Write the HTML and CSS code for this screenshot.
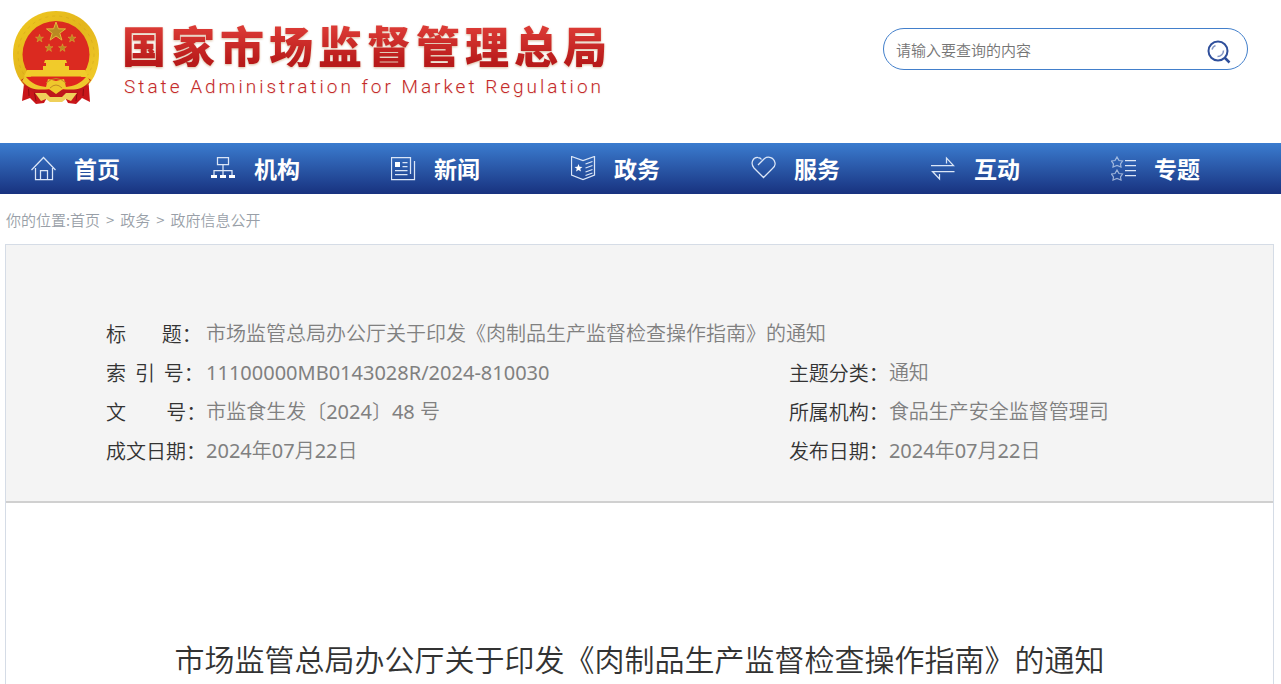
FILE: index.html
```html
<!DOCTYPE html>
<html lang="zh-CN">
<head>
<meta charset="utf-8">
<title>市场监管总局办公厅关于印发《肉制品生产监督检查操作指南》的通知</title>
<link rel="stylesheet" href="styles.css">
</head>
<body>
<header class="header">
  <a class="brand" href="#">
    <svg class="emblem" viewBox="0 0 88 94" aria-hidden="true">
      <defs>
        <linearGradient id="gold" x1="0" y1="0" x2="1" y2="1">
          <stop offset="0" stop-color="#f0ca1f"/><stop offset=".5" stop-color="#e3b51c"/><stop offset="1" stop-color="#f3cf2b"/>
        </linearGradient>
        <path id="star" d="M0-10 2.4-3.2 9.5-3.1 3.8 1.2 5.9 8.1 0 4-5.9 8.1-3.8 1.2-9.5-3.1-2.4-3.2Z"/>
      </defs>
      <path d="M13 64 10 90 18 87 24 93 32 92 37 83H51L56 92 64 93 70 87 78 91 76 64Z" fill="#c9161a"/>
      <path d="M16 68 17 85M21 74 24 90M72 68 71 85M66 74 64 90" stroke="#8d0c10" fill="none"/>
      <path d="M44 0C68 0 87 18 87 43 87 57 82 68 76 74L63 79H25L12 74C6 68 1 57 1 43 1 18 20 0 44 0Z" fill="url(#gold)"/>
      <circle cx="44" cy="43" r="38" fill="none" stroke="#c99b1c" stroke-width="1" stroke-dasharray="3 4" opacity=".4"/>
      <circle cx="44" cy="43.500" r="33.500" fill="#db2a20"/>
      <g fill="#b98a22" stroke="#e2bb3a" stroke-width="1">
        <use href="#star" transform="translate(44 21)"/>
        <use href="#star" transform="translate(27.500 27.500) scale(.42)"/>
        <use href="#star" transform="translate(60 27.500) scale(.42)"/>
        <use href="#star" transform="translate(37 37) scale(.42)"/>
        <use href="#star" transform="translate(50.500 37) scale(.42)"/>
      </g>
      <path d="M33 49H54L55 52H53V55H57V59H73L76 65.500H12L15 59H31V55H34V52H32Z" fill="#f1cb2a"/>
      <path d="M14 66H74L66 76 52 79H36L22 76Z" fill="#df251e"/>
      <path d="M14 66C20 77 28 76 36 79H52C60 76 68 77 74 66L79 69C72 81 62 84 51 86H37C26 84 16 81 9 69Z" fill="#bf171b"/>
      <path d="M13 65C20 73 26 75 34 76L36 68 44 70 52 68 54 76C62 75 68 73 75 65L78 70C70 80 60 79 51 78L44 83 37 78C28 79 18 80 10 70Z" fill="#efc82c"/>
      <path d="M23 82 34 82 38 86H50L54 82 65 82 59 90 54 88 50 91H38L34 88 29 90Z" fill="#efd05a"/>
      <path d="M34 72Q44 63 54 72M38 77Q44 71 50 77" fill="none" stroke="#c48b22" stroke-width="1"/>
    </svg>
    <span class="brand-text">
      <span class="brand-name">国家市场监督管理总局</span>
      <span class="brand-en">State Administration for Market Regulation</span>
    </span>
  </a>
  <form class="search" role="search">
    <input class="search-input" type="text" placeholder="请输入要查询的内容" aria-label="请输入要查询的内容">
    <button class="search-button" type="button" aria-label="搜索">
      <svg viewBox="0 0 24 24" width="24" height="24" fill="none" stroke="#2f4f9b" aria-hidden="true">
        <circle cx="11" cy="11" r="9.500" stroke-width="2"/>
        <path d="M17.500 17.500 22.500 22.500" stroke-width="2.500"/>
        <path d="M5 9.500A6 6 0 0 1 8.500 5.500M10.500 16.500A6 6 0 0 0 16.500 10.500" stroke-width="1.500" opacity=".6"/>
      </svg>
    </button>
  </form>
</header>

<nav class="nav" aria-label="主导航">
  <a class="nav-item" href="#">
    <svg class="nav-icon" viewBox="0 0 26 26"><path d="M.5 14 12.500 1.500 24.500 14M4.500 12V23.500H9.500V14.500H16.500V23.500H21.500V12M9.500 23.500H16.500"/></svg>首页</a>
  <a class="nav-item" href="#">
    <svg class="nav-icon" viewBox="0 0 26 26"><path d="M6.500 1.500H17.500V8.500H6.500ZM12 8.500V19M3 19V14.500H21V19"/><path class="solid" d="M0 19H6V22H0ZM9 19H15V22H9ZM18 19H24V22H18Z"/></svg>机构</a>
  <a class="nav-item" href="#">
    <svg class="nav-icon" viewBox="0 0 26 26"><path d="M19.500 18V1.500H.5V23.500H23.500V5M11.500 6.500H16.500M11.500 10.500H16.500M4 14.500H16.500M4 18.500H16.500"/><path class="solid" d="M4 6H9V11H4Z"/></svg>新闻</a>
  <a class="nav-item" href="#">
    <svg class="nav-icon" viewBox="0 0 26 26"><path d="M.5.500 12 4.500 23.500.500V19L12 23.500.500 19ZM14.500 8 21.500 5.500M14.500 12 21.500 9.500M14.500 16 21.500 13.500M14.500 19.500 21.500 17"/><path class="solid" d="M7.500 8 8.600 10.800 11.500 11 9.200 12.800 10 15.500 7.500 14 5 15.500 5.800 12.800 3.500 11 6.400 10.800Z"/></svg>政务</a>
  <a class="nav-item" href="#">
    <svg class="nav-icon" viewBox="0 0 26 26"><path d="M7 9 13.500 2.500C17 0 23 1 24 7 24.500 9 23 11.500 21 13L12.500 21.500 3 12C-1 7 2 1 7 1.500 8.500 1.500 10 2.500 10.500 3.500"/></svg>服务</a>
  <a class="nav-item" href="#">
    <svg class="nav-icon" viewBox="0 0 26 26"><path d="M0 9.500H22.500L15.500 2V7.500M23.500 15.500H1.500L8.500 23V18"/></svg>互动</a>
  <a class="nav-item" href="#">
    <svg class="nav-icon" viewBox="0 0 26 26"><path d="M14 4.500H25M14 9.500H25M14 14.500H25M14 19.500H25"/><g opacity=".65"><path id="outline-star" d="M6 1 8 4.500 11.500 5 9.500 8 10 11 6 9.500 2 11 2.500 8 .5 5 4 4.500Z"/><use href="#outline-star" y="13"/></g></svg>专题</a>
</nav>

<div class="crumbs">
  <span>你的位置:<a href="#">首页</a></span><span>&gt;</span><a href="#">政务</a><span>&gt;</span><a href="#">政府信息公开</a>
</div>

<main class="document">
  <dl class="meta">
    <div class="meta-row wide"><dt>标&nbsp;&nbsp;&nbsp;&nbsp;&nbsp;&nbsp;&nbsp;&nbsp;题：</dt><dd>市场监管总局办公厅关于印发《肉制品生产监督检查操作指南》的通知</dd></div>
    <div class="meta-row"><dt>索&nbsp;&nbsp;引&nbsp;&nbsp;号：</dt><dd><span class="num">11100000MB0143028R/2024-810030</span></dd></div>
    <div class="meta-row"><dt>主题分类：</dt><dd>通知</dd></div>
    <div class="meta-row"><dt>文&nbsp;&nbsp;&nbsp;&nbsp;&nbsp;&nbsp;&nbsp;&nbsp;&nbsp;号：</dt><dd>市监食生发〔<span class="num">2024</span>〕<span class="num">48 </span>号</dd></div>
    <div class="meta-row"><dt>所属机构：</dt><dd>食品生产安全监督管理司</dd></div>
    <div class="meta-row"><dt>成文日期：</dt><dd><span class="num">2024</span>年<span class="num">07</span>月<span class="num">22</span>日</dd></div>
    <div class="meta-row"><dt>发布日期：</dt><dd><span class="num">2024</span>年<span class="num">07</span>月<span class="num">22</span>日</dd></div>
  </dl>
  <h1 class="title">市场监管总局办公厅关于印发《肉制品生产监督检查操作指南》的通知</h1>
</main>
</body>
</html>
```
FILE: styles.css
```css
* { box-sizing: border-box; }

body {
  display: flex;
  flex-direction: column;
  min-height: 100vh;
  margin: 0;
  background: #fff;
  color: #333;
  font-family: "Noto Sans", "Noto Sans CJK SC", sans-serif;
}

a { color: inherit; text-decoration: none; }

.header {
  display: flex;
  justify-content: space-between;
  align-items: flex-start;
  height: 143px;
  padding: 0 33px 0 12px;
}

.brand { display: flex; gap: 22px; padding-top: 11px; }
.emblem { width: 88px; height: 94px; }
.brand-text { display: flex; flex-direction: column; gap: 8px; padding-top: 12px; }

.brand-name {
  background: linear-gradient(#db3a35 10%, #b81a1a 90%);
  background-clip: text;
  color: transparent;
  font: 900 44px/44px "Noto Sans CJK SC", sans-serif;
  letter-spacing: 5px;
  filter: drop-shadow(0 1px 1px #d8b89c);
  white-space: nowrap;
}

.brand-en {
  padding-left: 2px;
  color: #c5282a;
  font: 300 19px/24px Roboto, sans-serif;
  letter-spacing: 3px;
  text-shadow: 0 1px 1px #f0e2d6;
  white-space: nowrap;
}

.search {
  display: flex;
  align-items: center;
  width: 365px;
  height: 42px;
  margin-top: 28px;
  padding: 0 16px 0 12px;
  border: 1px solid #427fcb;
  border-radius: 21px;
}

.search-input {
  flex: 1;
  min-width: 0;
  padding: 2px 0 0;
  border: 0;
  outline: 0;
  background: none;
  font: 350 15px/24px "Noto Sans CJK SC", sans-serif;
}
.search-input::placeholder { color: #757575; }

.search-button {
  display: flex;
  padding: 5px 0 0;
  border: 0;
  background: none;
  cursor: pointer;
}

.nav {
  display: flex;
  height: 51px;
  padding-left: 31px;
  background: linear-gradient(#3b7ccf, #18327f);
}

.nav-item {
  display: flex;
  flex: 0 0 180px;
  align-items: center;
  gap: 17px;
  color: #fff;
  font: 700 23px/51px "Noto Sans CJK SC", sans-serif;
}
.nav-item:last-child { flex-basis: 139px; }

.nav-icon {
  width: 26px;
  height: 26px;
  fill: none;
  stroke: #dbe6f7;
  stroke-width: 1.25;
}
.nav-icon .solid { fill: #fff; stroke: none; }

.crumbs {
  display: flex;
  gap: 6px;
  height: 50px;
  padding-left: 6px;
  color: #999fa8;
  font: 350 15px/52px "Noto Sans CJK SC", sans-serif;
}

.document {
  flex: 1;
  margin: 0 7px 0 5px;
  border: 1px solid #d5dce6;
  border-bottom: 0;
}

.meta {
  display: grid;
  grid-template-columns: 64fr 36fr;
  margin: 0;
  padding: 69px 100px 31px;
  border-bottom: 2px solid #d0d0d0;
  background: #f4f4f4;
  font-size: 20px;
  font-weight: 350;
  line-height: 39px;
}

.meta-row { display: flex; }
.meta-row.wide { grid-column: 1 / -1; }
.meta dt { flex: 0 0 100px; font-family: "Noto Sans CJK SC", sans-serif; white-space: nowrap; }
.meta dd { margin: 0; color: #808080; }
.num { font-weight: 400; }

.title {
  margin: 0;
  padding-top: 137px;
  font-size: 30px;
  font-weight: 350;
  line-height: 40px;
  text-align: center;
}
```
